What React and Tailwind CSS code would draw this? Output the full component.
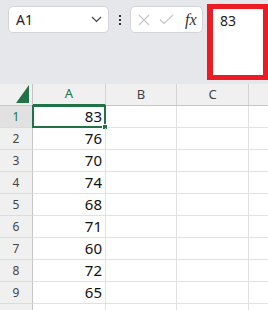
import React from "react";

const rows = [83, 76, 70, 74, 68, 71, 60, 72, 65, null];

function Chevron() {
  return (
    <svg width="11" height="7" viewBox="0 0 11 7" fill="none">
      <path d="M1 1l4.5 4.5L10 1" stroke="#444" strokeWidth="1.2" />
    </svg>
  );
}

export default function App() {
  const font = { fontFamily: '"Noto Sans", "Segoe UI", sans-serif' };
  return (
    <div className="w-[268px] h-[310px] overflow-hidden bg-white" style={font}>
      {/* formula bar */}
      <div className="h-[84px] bg-[#e6e7eb] flex items-start pt-[4px]">
        <div className="ml-[8px] mt-[2px] w-[101px] h-[27px] bg-white border border-[#d4d5d9] rounded-[5px] flex items-center pl-[7px] pr-[6px]">
          <span className="text-[14px] text-[#222] flex-1 leading-none">A1</span>
          <Chevron />
        </div>
        <div className="w-[21px] h-[27px] mt-[2px] flex flex-col items-center justify-center gap-[2px]">
          <div className="w-[2px] h-[2px] bg-[#333]" />
          <div className="w-[2px] h-[2px] bg-[#333]" />
          <div className="w-[2px] h-[2px] bg-[#333]" />
        </div>
        <div className="w-[73px] h-[27px] mt-[2px] bg-white border border-[#d4d5d9] rounded-[5px] flex items-center pl-[6px]">
          <svg width="12" height="12" viewBox="0 0 12 12" className="ml-[1px]">
            <path d="M1 1L11 11M11 1L1 11" stroke="#c4c4c4" strokeWidth="1.1" />
          </svg>
          <svg width="15" height="11" viewBox="0 0 15 11" className="ml-[9px]">
            <path d="M1 5.5L5 9.5L14 1" stroke="#c4c4c4" strokeWidth="1.1" fill="none" />
          </svg>
          <span
            className="ml-[11px] text-[16px] italic text-[#333] leading-none"
            style={{ fontFamily: '"Liberation Serif", "DejaVu Serif", serif' }}
          >
            fx
          </span>
        </div>
        <div className="ml-[4px] w-[61px] h-[76px] bg-white border-[5px] border-l-[6px] border-[#ed1c24] pl-[7px] pt-[5px]">
          <div className="text-[14px] text-[#222] leading-none">83</div>
        </div>
      </div>
      {/* grid */}
      <div className="grid grid-cols-[33px_73px_71px_72px_1fr] auto-rows-[22px] text-[#444]">
        {/* header row */}
        <div className="bg-[#f0f0f0] border-r border-b border-[#c6c6c6] flex items-end justify-end pr-[3px] pb-[2px]">
          <svg width="13" height="18" viewBox="0 0 13 18">
            <path d="M13 0V18H0Z" fill="#217346" />
          </svg>
        </div>
        <div className="bg-[#f0f0f0] border-r border-[#d4d4d4] border-b-2 border-b-[#217346] flex items-center justify-center text-[13px] text-[#217346]">
          A
        </div>
        <div className="bg-[#f0f0f0] border-r border-[#d4d4d4] border-b border-b-[#c6c6c6] flex items-center justify-center text-[13px]">
          B
        </div>
        <div className="bg-[#f0f0f0] border-r border-[#d4d4d4] border-b border-b-[#c6c6c6] flex items-center justify-center text-[13px]">
          C
        </div>
        <div className="bg-[#f0f0f0] border-b border-b-[#c6c6c6]" />
        {rows.map((v, i) => (
          <React.Fragment key={i}>
            <div
              className={`border-r border-[#c6c6c6] border-b border-b-[#dcdcdc] flex items-center justify-center text-[12px] ${
                i === 0 ? "bg-[#e1e1e1] text-[#217346]" : "bg-[#f0f0f0]"
              }`}
            >
              {v !== null ? i + 1 : ""}
            </div>
            <div className="relative border-r border-b border-[#e1e1e1] flex items-center justify-end pr-[3px] text-[15px] text-[#111]">
              {v}
              {i === 0 && (
                <div className="absolute -left-[1px] -top-[1px] -right-[1px] -bottom-[1px] border-2 border-[#217346]">
                  <div className="absolute -right-[4px] -bottom-[4px] w-[6px] h-[6px] bg-[#217346] border border-white" />
                </div>
              )}
            </div>
            <div className="border-r border-b border-[#e1e1e1]" />
            <div className="border-r border-b border-[#e1e1e1]" />
            <div className="border-b border-[#e1e1e1]" />
          </React.Fragment>
        ))}
      </div>
    </div>
  );
}
